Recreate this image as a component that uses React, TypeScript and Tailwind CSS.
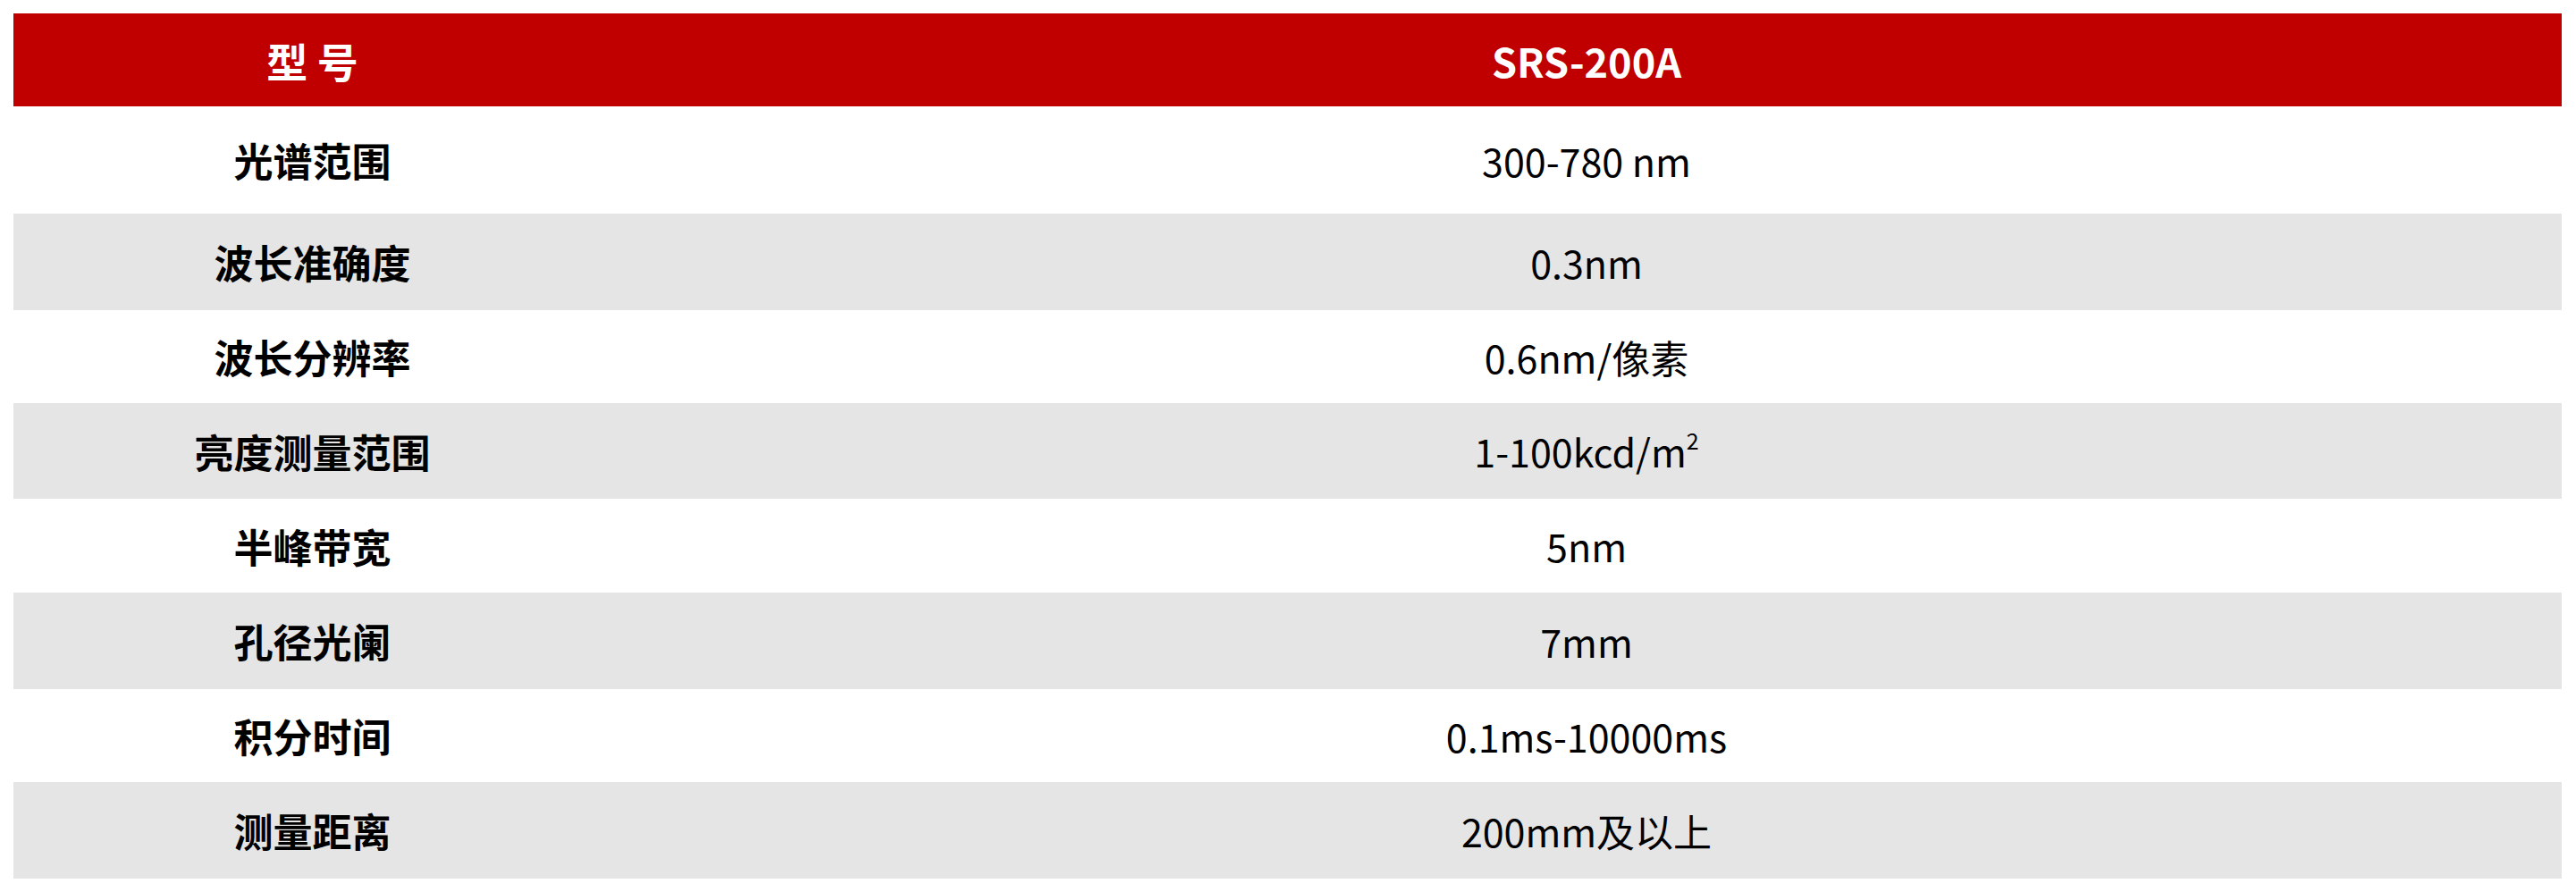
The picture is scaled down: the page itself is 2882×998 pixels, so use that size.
const rows = [
  { label: "光谱范围", value: <>300-780 nm</>, h: "h-[120px]", bg: "bg-white" },
  { label: "波长准确度", value: <>0.3nm</>, h: "h-[108px]", bg: "bg-[#e5e5e5]" },
  { label: "波长分辨率", value: <>0.6nm/像素</>, h: "h-[104px]", bg: "bg-white" },
  {
    label: "亮度测量范围",
    value: (
      <>
        1-100kcd/m<sup className="relative -top-[20px] align-baseline text-[25px]">2</sup>
      </>
    ),
    h: "h-[107px]",
    bg: "bg-[#e5e5e5]",
  },
  { label: "半峰带宽", value: <>5nm</>, h: "h-[105px]", bg: "bg-white" },
  { label: "孔径光阑", value: <>7mm</>, h: "h-[108px]", bg: "bg-[#e5e5e5]" },
  { label: "积分时间", value: <>0.1ms-10000ms</>, h: "h-[104px]", bg: "bg-white" },
  { label: "测量距离", value: <>200mm及以上</>, h: "h-[108px]", bg: "bg-[#e5e5e5]" },
]

export default function App() {
  return (
    <div className="min-h-[998px] w-[2882px] bg-white pl-[15px] pr-[16px] pt-[15px] font-['Noto_Sans_CJK_SC','Noto_Sans',sans-serif] text-black">
      <div className="grid h-[104px] grid-cols-[669px_1fr] bg-[#c00000] font-bold leading-none text-white">
        <div className="flex items-center justify-center text-[46px]">型&nbsp;号</div>
        <div className="flex items-center justify-center text-[45px]">SRS-200A</div>
      </div>
      {rows.map((row) => (
        <div
          key={row.label}
          className={`grid grid-cols-[669px_1fr] leading-none ${row.h} ${row.bg}`}
        >
          <div className="flex items-center justify-center text-[44px] font-bold">{row.label}</div>
          <div className="flex items-center justify-center text-[43px]">
            <span>{row.value}</span>
          </div>
        </div>
      ))}
    </div>
  )
}
